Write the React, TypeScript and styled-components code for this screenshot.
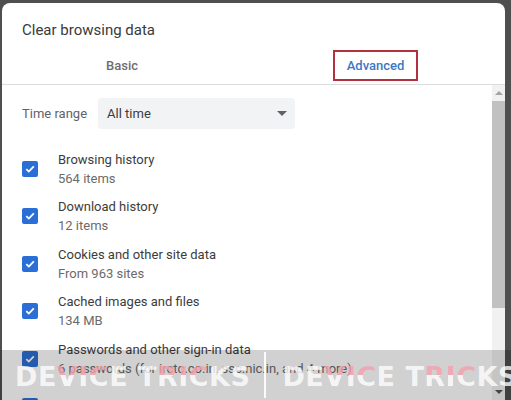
import React from "react";
import styled, { createGlobalStyle } from "styled-components";

const GlobalStyle = createGlobalStyle`
  html, body {
    margin: 0;
    padding: 0;
    height: 100%;
    overflow: hidden;
    background: #4f4f4f;
    font-family: Roboto, "Liberation Sans", Arial, sans-serif;
  }
  #root {
    height: 100%;
  }
`;

const Page = styled.div`
  height: 100%;
  padding: 3px 0 0 2px;
  box-sizing: border-box;
  position: relative;
  overflow: hidden;
`;

const Dialog = styled.div`
  width: 503px;
  height: 100%;
  background: #fff;
  border-radius: 8px 8px 0 0;
  overflow: hidden;
  display: flex;
  flex-direction: column;
`;

const Title = styled.h2`
  margin: 0;
  padding: 17px 20px 0;
  font-size: 15px;
  line-height: 20px;
  font-weight: 400;
  color: #3a3a3a;
`;

const TabRow = styled.div`
  display: grid;
  grid-template-columns: 240px 267px;
  height: 38px;
  margin-top: 6px;
  border-bottom: 1px solid #dcdcdc;
`;

const Tab = styled.div<{ $active?: boolean }>`
  display: flex;
  align-items: center;
  justify-content: center;
  font-size: 13px;
  font-weight: 500;
  color: ${(p) => (p.$active ? "#3b78c4" : "#6e6e6e")};
`;

const Highlight = styled.span`
  display: inline-block;
  padding: 5px 12px;
  line-height: 17px;
  border: 2px solid #b3303e;
`;

const ScrollArea = styled.div`
  flex: 1;
  display: flex;
  min-height: 0;
`;

const Content = styled.div`
  flex: 1;
  padding: 13px 0 0 20px;
  overflow: hidden;
`;

const RangeRow = styled.div`
  display: flex;
  align-items: center;
  gap: 11px;
`;

const Label = styled.span`
  font-size: 13px;
  color: #5f6368;
`;

const Select = styled.div`
  width: 197px;
  height: 31px;
  box-sizing: border-box;
  padding: 0 8px 0 9px;
  background: #f1f3f4;
  border-radius: 4px;
  display: flex;
  align-items: center;
  justify-content: space-between;
  font-size: 13px;
  color: #3c3c3c;
`;

const Caret = styled.span`
  width: 0;
  height: 0;
  border-left: 5px solid transparent;
  border-right: 5px solid transparent;
  border-top: 5px solid #5f6368;
`;

const List = styled.div`
  margin-top: 16px;
`;

const Item = styled.div`
  display: flex;
  align-items: center;
  height: 47.5px;
`;

const Box = styled.span`
  width: 16px;
  height: 16px;
  border-radius: 2px;
  background: #2b6fd6;
  display: flex;
  align-items: center;
  justify-content: center;
  margin: 0 20px 0 0;
  flex-shrink: 0;
`;

const ItemText = styled.div`
  display: flex;
  flex-direction: column;
  font-size: 13px;
  line-height: 19px;
`;

const ItemTitle = styled.span`
  color: #3c3c3c;
`;

const ItemSub = styled.span`
  color: #6b6b6b;
`;

const Scrollbar = styled.div`
  width: 13px;
  background: #f1f1f1;
  display: flex;
  flex-direction: column;
  align-items: center;
`;

const Arrow = styled.span<{ $down?: boolean }>`
  width: 0;
  height: 0;
  margin: 6px 0;
  border-left: 4px solid transparent;
  border-right: 4px solid transparent;
  ${(p) =>
    p.$down
      ? "border-top: 4px solid #555;"
      : "border-bottom: 4px solid #a3a3a3;"}
`;

const Thumb = styled.div`
  width: 13px;
  height: 207px;
  background: #c1c1c1;
`;

const Spacer = styled.div`
  flex: 1;
`;

const Watermark = styled.div`
  position: absolute;
  left: 0;
  right: 0;
  top: 350px;
  bottom: 0;
  padding-left: 15px;
  background: rgba(0, 0, 0, 0.18);
  display: flex;
  align-items: center;
  pointer-events: none;
`;

const Mark = styled.span`
  font-family: "DejaVu Sans", "Liberation Sans", sans-serif;
  font-weight: 700;
  font-size: 27px;
  letter-spacing: 0.5px;
  color: rgba(255, 255, 255, 0.78);
  white-space: nowrap;
  margin-top: 3px;
`;

const Tint = styled.span`
  background: linear-gradient(
    rgba(244, 160, 172, 0.8) 0 45%,
    rgba(255, 255, 255, 0.78) 45% 100%
  );
  -webkit-background-clip: text;
  background-clip: text;
  color: transparent;
`;

const Divider = styled.span`
  width: 2px;
  height: 46px;
  flex-shrink: 0;
  background: rgba(255, 255, 255, 0.9);
  margin: 0 16px 0 14px;
`;

const items = [
  { title: "Browsing history", sub: "564 items" },
  { title: "Download history", sub: "12 items" },
  { title: "Cookies and other site data", sub: "From 963 sites" },
  { title: "Cached images and files", sub: "134 MB" },
  {
    title: "Passwords and other sign-in data",
    sub: "6 passwords (for irctc.co.in, ssc.nic.in, and 4 more)",
  },
  { title: "Autofill form data", sub: "" },
];

function Check() {
  return (
    <svg width="12" height="12" viewBox="0 0 12 12">
      <path
        d="M2.3 6.2 L4.8 8.6 L9.8 3.4"
        fill="none"
        stroke="#fff"
        strokeWidth="1.8"
      />
    </svg>
  );
}

function Logo() {
  return (
    <Mark>
      DE<Tint>VIC</Tint>E T<Tint>RIC</Tint>KS
    </Mark>
  );
}

export default function App() {
  return (
    <Page>
      <GlobalStyle />
      <Dialog>
        <Title>Clear browsing data</Title>
        <TabRow>
          <Tab>Basic</Tab>
          <Tab $active>
            <Highlight>Advanced</Highlight>
          </Tab>
        </TabRow>
        <ScrollArea>
          <Content>
            <RangeRow>
              <Label>Time range</Label>
              <Select>
                All time
                <Caret />
              </Select>
            </RangeRow>
            <List>
              {items.map((it) => (
                <Item key={it.title}>
                  <Box>
                    <Check />
                  </Box>
                  <ItemText>
                    <ItemTitle>{it.title}</ItemTitle>
                    {it.sub && <ItemSub>{it.sub}</ItemSub>}
                  </ItemText>
                </Item>
              ))}
            </List>
          </Content>
          <Scrollbar>
            <Arrow />
            <Thumb />
            <Spacer />
            <Arrow $down />
          </Scrollbar>
        </ScrollArea>
      </Dialog>
      <Watermark>
        <Logo />
        <Divider />
        <Logo />
      </Watermark>
    </Page>
  );
}
